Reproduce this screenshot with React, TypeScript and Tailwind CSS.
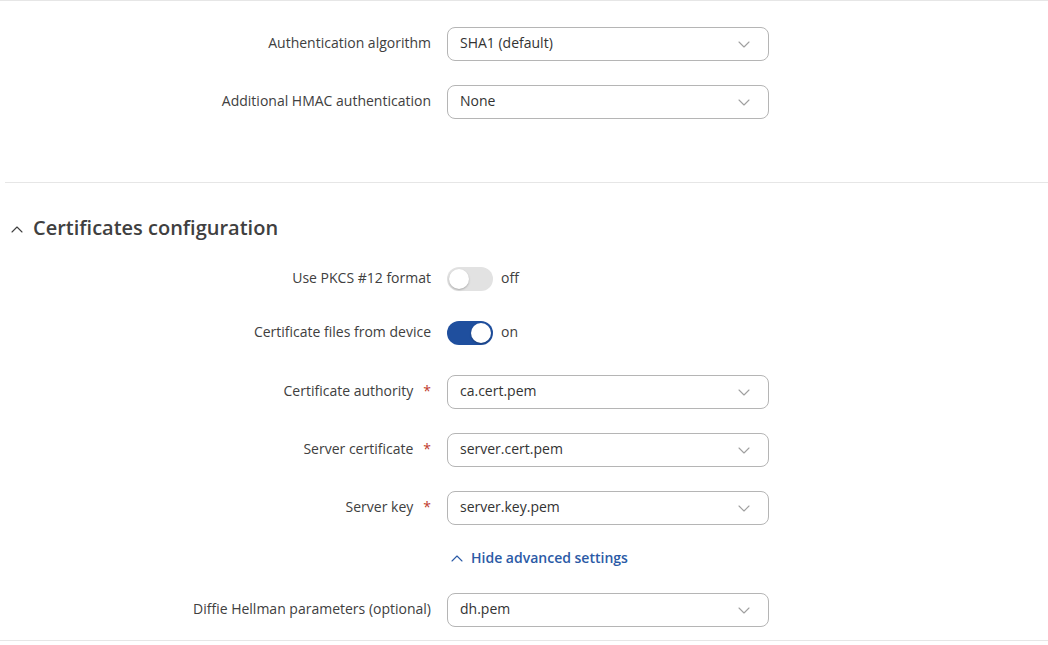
import React from 'react';

const font = { fontFamily: '"Open Sans", "Noto Sans", sans-serif' };

function Chevron({ up = false, className = '' }: { up?: boolean; className?: string }) {
  return (
    <svg width="12" height="7" viewBox="0 0 12 7" className={className} fill="none">
      <path
        d={up ? 'M1 6L6 1L11 6' : 'M1 1L6 6L11 1'}
        stroke="currentColor"
        strokeWidth="1.1"
        strokeLinecap="round"
        strokeLinejoin="round"
      />
    </svg>
  );
}

function Label({ text, required = false }: { text: string; required?: boolean }) {
  return (
    <div className="w-[431px] shrink-0 pb-[3px] text-right text-[14px] leading-[20px] text-[#404040]">
      {text}
      {required && <span className="ml-[10px] text-[#c0392b]">*</span>}
    </div>
  );
}

function Select({ value }: { value: string }) {
  return (
    <div className="ml-4 flex h-[34px] w-[322px] items-center justify-between rounded-[8px] border border-[#b5b5b5] bg-white pl-[12px] pr-[18px] text-[14px] leading-[20px] text-[#333]">
      <span className="pb-[2px]">{value}</span>
      <Chevron className="text-[#a0a0a0]" />
    </div>
  );
}

function SelectRow({ label, value, required, className = '' }: { label: string; value: string; required?: boolean; className?: string }) {
  return (
    <div className={`flex items-center ${className}`}>
      <Label text={label} required={required} />
      <Select value={value} />
    </div>
  );
}

function Toggle({ on }: { on: boolean }) {
  return (
    <div className="ml-4 flex items-center">
      <div
        className={`flex h-[24px] w-[46px] items-center rounded-full px-[2px] ${
          on ? 'justify-end bg-[#1f4f9e]' : 'justify-start bg-[#e2e2e2]'
        }`}
      >
        <div className="h-[20px] w-[20px] rounded-full bg-white shadow-[0_1px_2px_rgba(0,0,0,0.25)]" />
      </div>
      <span className="ml-[8px] pb-[3px] text-[14px] leading-[20px] text-[#404040]">{on ? 'on' : 'off'}</span>
    </div>
  );
}

export default function App() {
  return (
    <div className="h-[645px] w-[1048px] overflow-hidden bg-white" style={font}>
      <div className="border-t border-[#e6e6e6]" />
      <div className="pt-[26px]">
        <SelectRow label="Authentication algorithm" value="SHA1 (default)" />
        <SelectRow className="mt-[24px]" label="Additional HMAC authentication" value="None" />
      </div>

      <div className="ml-[5px] mt-[63px] border-t border-[#e6e6e6]" />

      <div className="mt-[32px] flex h-[28px] items-center">
        <Chevron up className="ml-[11px] text-[#404040]" />
        <h2 className="ml-[10px] pb-[2px] text-[20px] font-semibold text-[#404040]">Certificates configuration</h2>
      </div>

      <div className="mt-[24px] flex h-[24px] items-center">
        <Label text="Use PKCS #12 format" />
        <Toggle on={false} />
      </div>
      <div className="mt-[30px] flex h-[24px] items-center">
        <Label text="Certificate files from device" />
        <Toggle on />
      </div>

      <SelectRow className="mt-[30px]" label="Certificate authority" value="ca.cert.pem" required />
      <SelectRow className="mt-[24px]" label="Server certificate" value="server.cert.pem" required />
      <SelectRow className="mt-[24px]" label="Server key" value="server.key.pem" required />

      <div className="mt-[23px] flex h-[20px] items-center pl-[451px] text-[14px] font-semibold text-[#2b5aa6]">
        <Chevron up />
        <span className="ml-[8px] pb-[2px]">Hide advanced settings</span>
      </div>

      <SelectRow className="mt-[25px]" label="Diffie Hellman parameters (optional)" value="dh.pem" />

      <div className="mt-[13px] border-t border-[#e6e6e6]" />
    </div>
  );
}
